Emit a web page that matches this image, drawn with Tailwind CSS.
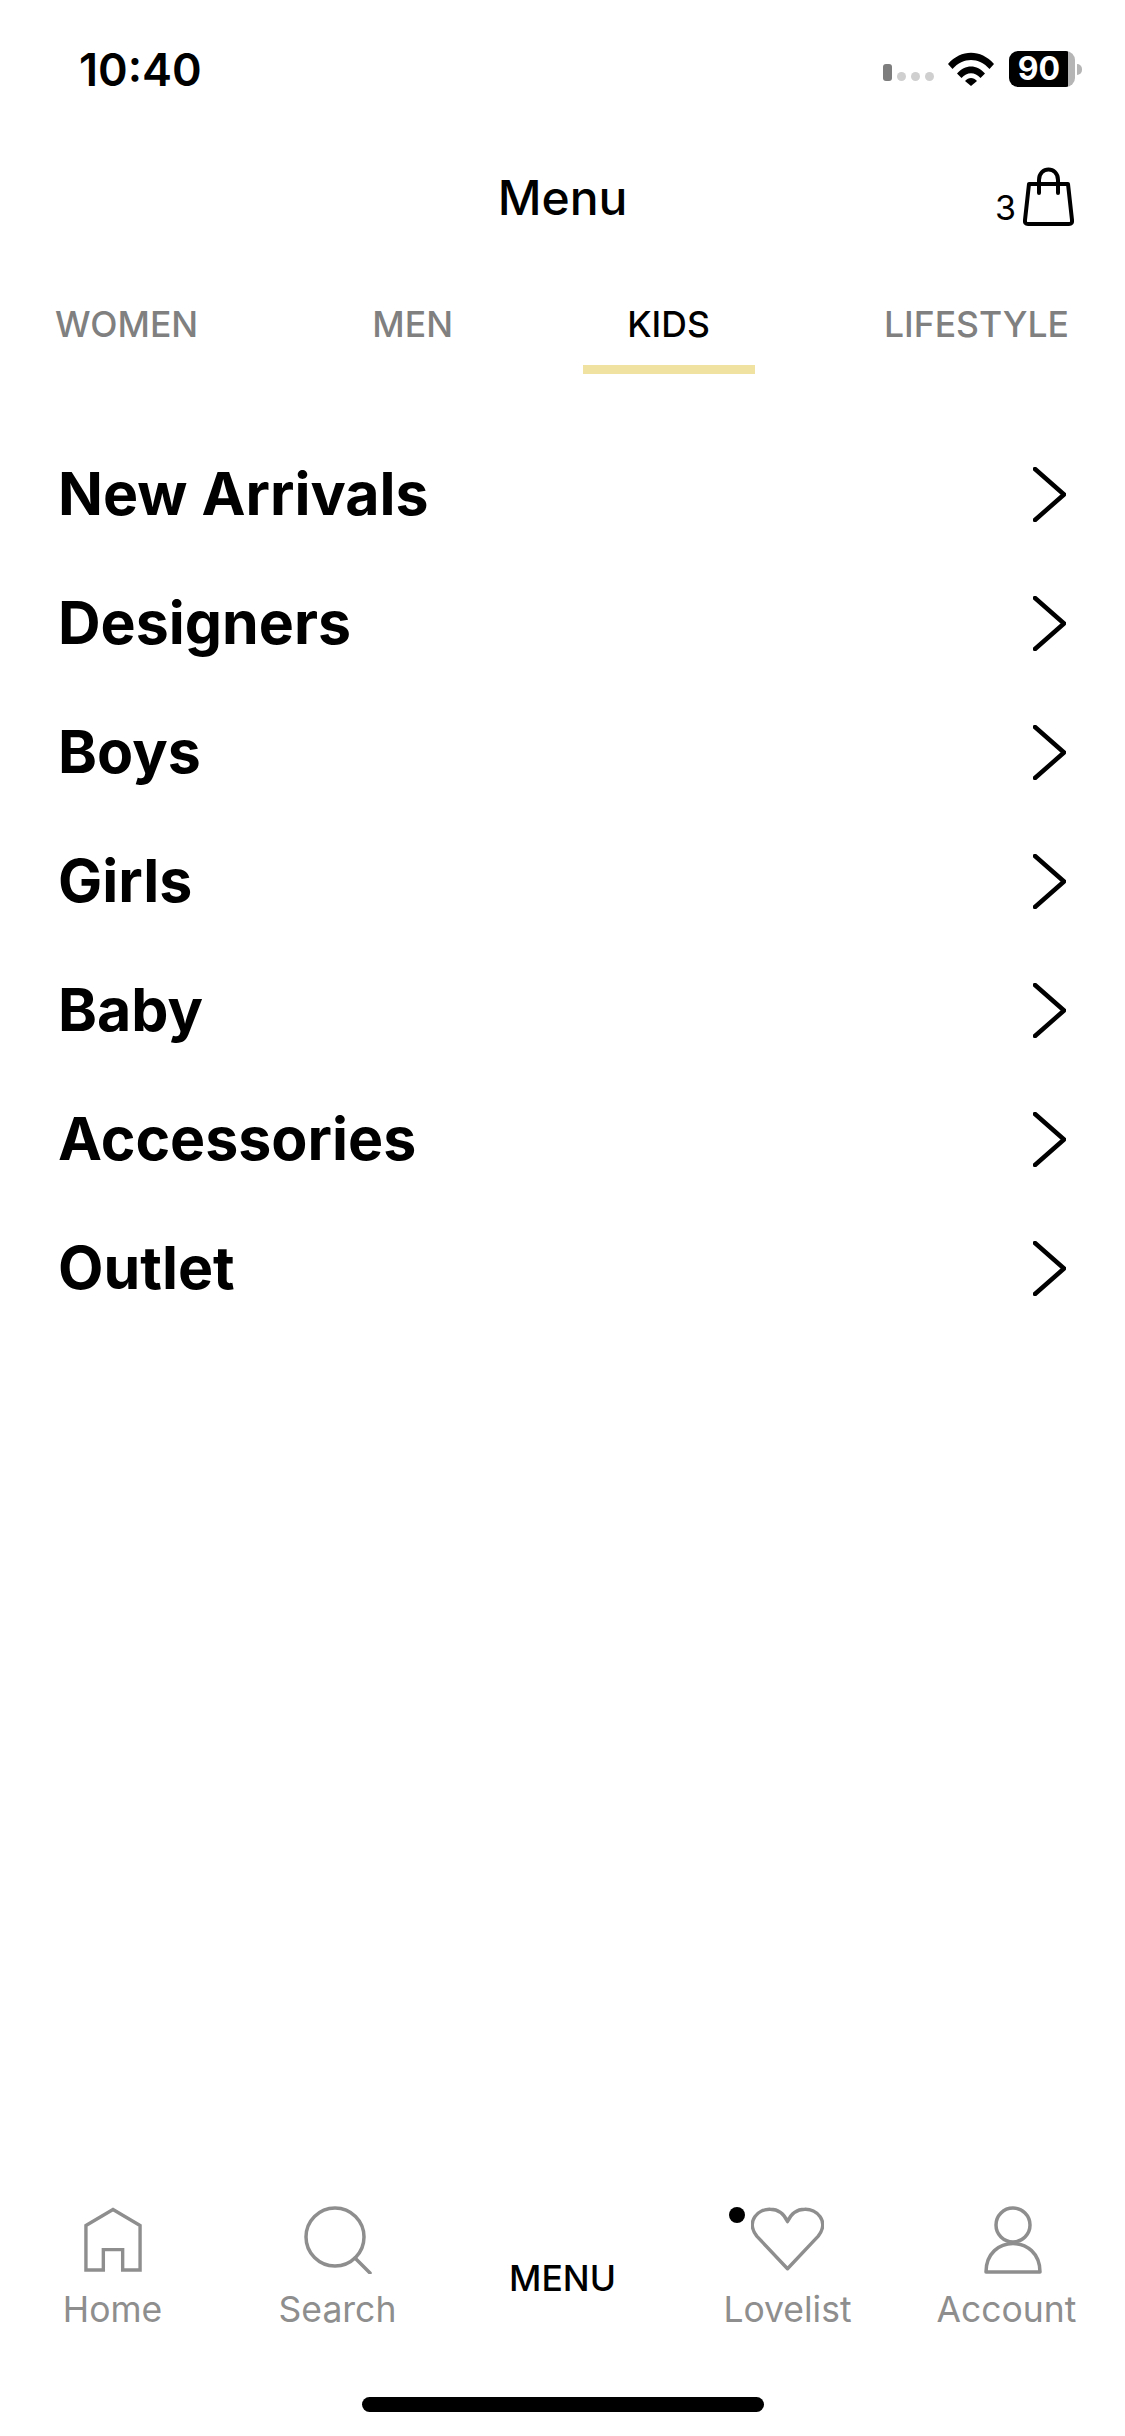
<!DOCTYPE html>
<html lang="en">
<head>
    <meta charset="UTF-8">
    <title>Menu</title>
    <meta name="viewport" content="width=device-width, initial-scale=1.0">
    <script src="https://cdn.jsdelivr.net/npm/@tailwindcss/browser@4"></script>
</head>
<body class="bg-white text-black font-['Inter',sans-serif]">
<div class="flex flex-col w-[1125px] h-[2436px] overflow-hidden">

    <!-- status bar -->
    <div class="flex items-center justify-between h-[138px] pl-[79px] pr-[43px]">
        <span class="text-[45px] leading-none font-semibold">10:40</span>
        <div class="flex items-center">
            <div class="flex items-end gap-[5px] mt-[6px]">
                <span class="w-[9px] h-[17px] rounded-[3px] bg-[#7d7d7d]"></span>
                <span class="w-[9px] h-[9px] rounded-full bg-[#cfcfcf]"></span>
                <span class="w-[9px] h-[9px] rounded-full bg-[#cfcfcf]"></span>
                <span class="w-[9px] h-[9px] rounded-full bg-[#cfcfcf]"></span>
            </div>
            <svg class="ml-[14px]" width="46" height="34" viewBox="0 0 46 34">
                <path d="M0 12C13 -3 33 -3 46 12L41.500 17C31 5 15 5 4.500 17Z" fill="#000"/>
                <path d="M9 21.500C17 12 29 12 37 21.500L32.500 26C27 19.500 19 19.500 13.500 26Z" fill="#000"/>
                <path d="M17 29C20.500 25 25.500 25 29 29L23 34Z" fill="#000"/>
            </svg>
            <div class="ml-[15px] flex items-center">
                <div class="flex items-center justify-center w-[66px] h-[36px] rounded-[9px] bg-[linear-gradient(to_right,#000_0,#000_59px,#b5b5b5_59px)]">
                    <span class="pr-[6px] text-[32px] leading-none font-bold text-white">90</span>
                </div>
                <span class="ml-[2px] w-[5px] h-[11px] rounded-r-full bg-[#b5b5b5]"></span>
            </div>
        </div>
    </div>

    <!-- header -->
    <div class="relative flex items-center justify-center h-[120px]">
        <h1 class="text-[48px] leading-none font-[550]">Menu</h1>
        <div class="absolute right-[51px] top-[29px] flex items-end gap-[7px]">
            <span class="mb-[1px] text-[34px] leading-none">3</span>
            <svg width="51" height="59" viewBox="0 0 51 59" fill="none" stroke="#000" stroke-width="4" stroke-linejoin="round" stroke-linecap="round">
                <path d="M6 17H45L49 53Q49.500 57 46 57H5Q1.500 57 2 53Z"/>
                <path d="M16 26V13C16 -1 35 -1 35 13V26"/>
            </svg>
        </div>
    </div>

    <!-- department tabs -->
    <div class="flex justify-between pl-[55px] pr-[56px] pt-[53px] text-[35.500px] leading-[28px] font-[550] text-[#808080]">
        <span>WOMEN</span>
        <span>MEN</span>
        <span class="relative text-black">KIDS
            <span class="absolute left-[-44px] right-[-45px] top-[54px] h-[9px] bg-[#f0e2a0]"></span>
        </span>
        <span>LIFESTYLE</span>
    </div>

    <!-- categories -->
    <ul class="mt-[91px] pl-[58px] pr-[59px] text-[59px] font-bold">
        <li class="flex items-center justify-between h-[129px]"><span>New Arrivals</span>
            <svg width="33" height="55" viewBox="0 0 33 55" fill="none" stroke="#000" stroke-width="4.500" stroke-linecap="round" stroke-linejoin="round"><path d="M2 2L31 27.500L2 53"/></svg></li>
        <li class="flex items-center justify-between h-[129px]"><span>Designers</span>
            <svg width="33" height="55" viewBox="0 0 33 55" fill="none" stroke="#000" stroke-width="4.500" stroke-linecap="round" stroke-linejoin="round"><path d="M2 2L31 27.500L2 53"/></svg></li>
        <li class="flex items-center justify-between h-[129px]"><span>Boys</span>
            <svg width="33" height="55" viewBox="0 0 33 55" fill="none" stroke="#000" stroke-width="4.500" stroke-linecap="round" stroke-linejoin="round"><path d="M2 2L31 27.500L2 53"/></svg></li>
        <li class="flex items-center justify-between h-[129px]"><span>Girls</span>
            <svg width="33" height="55" viewBox="0 0 33 55" fill="none" stroke="#000" stroke-width="4.500" stroke-linecap="round" stroke-linejoin="round"><path d="M2 2L31 27.500L2 53"/></svg></li>
        <li class="flex items-center justify-between h-[129px]"><span>Baby</span>
            <svg width="33" height="55" viewBox="0 0 33 55" fill="none" stroke="#000" stroke-width="4.500" stroke-linecap="round" stroke-linejoin="round"><path d="M2 2L31 27.500L2 53"/></svg></li>
        <li class="flex items-center justify-between h-[129px]"><span>Accessories</span>
            <svg width="33" height="55" viewBox="0 0 33 55" fill="none" stroke="#000" stroke-width="4.500" stroke-linecap="round" stroke-linejoin="round"><path d="M2 2L31 27.500L2 53"/></svg></li>
        <li class="flex items-center justify-between h-[129px]"><span>Outlet</span>
            <svg width="33" height="55" viewBox="0 0 33 55" fill="none" stroke="#000" stroke-width="4.500" stroke-linecap="round" stroke-linejoin="round"><path d="M2 2L31 27.500L2 53"/></svg></li>
    </ul>

    <div class="flex-1"></div>

    <!-- bottom nav -->
    <nav class="grid grid-cols-5 h-[121px] text-[35.500px] leading-none text-[#8e8e8e]">
        <a class="flex flex-col items-center justify-between">
            <svg class="mt-[1px]" width="58" height="66" viewBox="0 0 60 66" fill="none" stroke="#8e8e8e" stroke-width="3.500">
                <path d="M2 18L30 1.500L58 18V64H40V43H20V64H2Z"/>
            </svg>
            <span>Home</span>
        </a>
        <a class="flex flex-col items-center justify-between">
            <svg width="68" height="68" viewBox="0 0 68 68" fill="none" stroke="#8e8e8e" stroke-width="3.500" stroke-linecap="round">
                <circle cx="31" cy="31" r="29"/>
                <path d="M51 52L66 67"/>
            </svg>
            <span>Search</span>
        </a>
        <a class="flex items-start justify-center pt-[55px] font-[550] text-[35.500px] text-black">MENU</a>
        <a class="relative flex flex-col items-center justify-between">
            <span class="absolute left-[54px] top-[1px] w-[16px] h-[16px] rounded-full bg-black"></span>
            <svg width="73" height="66" viewBox="0 0 76 66" fill="none" stroke="#8e8e8e" stroke-width="3.500" stroke-linejoin="round">
                <path d="M38 64L6 30C-6 14 8 1.500 20 2C29 2 35 8 38 15C41 8 47 2 56 2C68 1.500 82 14 70 30Z"/>
            </svg>
            <span>Lovelist</span>
        </a>
        <a class="flex flex-col items-center justify-between">
            <svg width="58" height="68" viewBox="0 0 58 68" fill="none" stroke="#8e8e8e" stroke-width="3.500" stroke-linejoin="round">
                <circle cx="29" cy="19" r="17"/>
                <path d="M2 66C2 28 56 28 56 66Z"/>
            </svg>
            <span class="pr-[12px]">Account</span>
        </a>
    </nav>

    <!-- home indicator -->
    <div class="flex justify-center pt-[70px] pb-[24px]">
        <span class="w-[402px] h-[15px] rounded-full bg-black"></span>
    </div>
</div>
</body>
</html>
